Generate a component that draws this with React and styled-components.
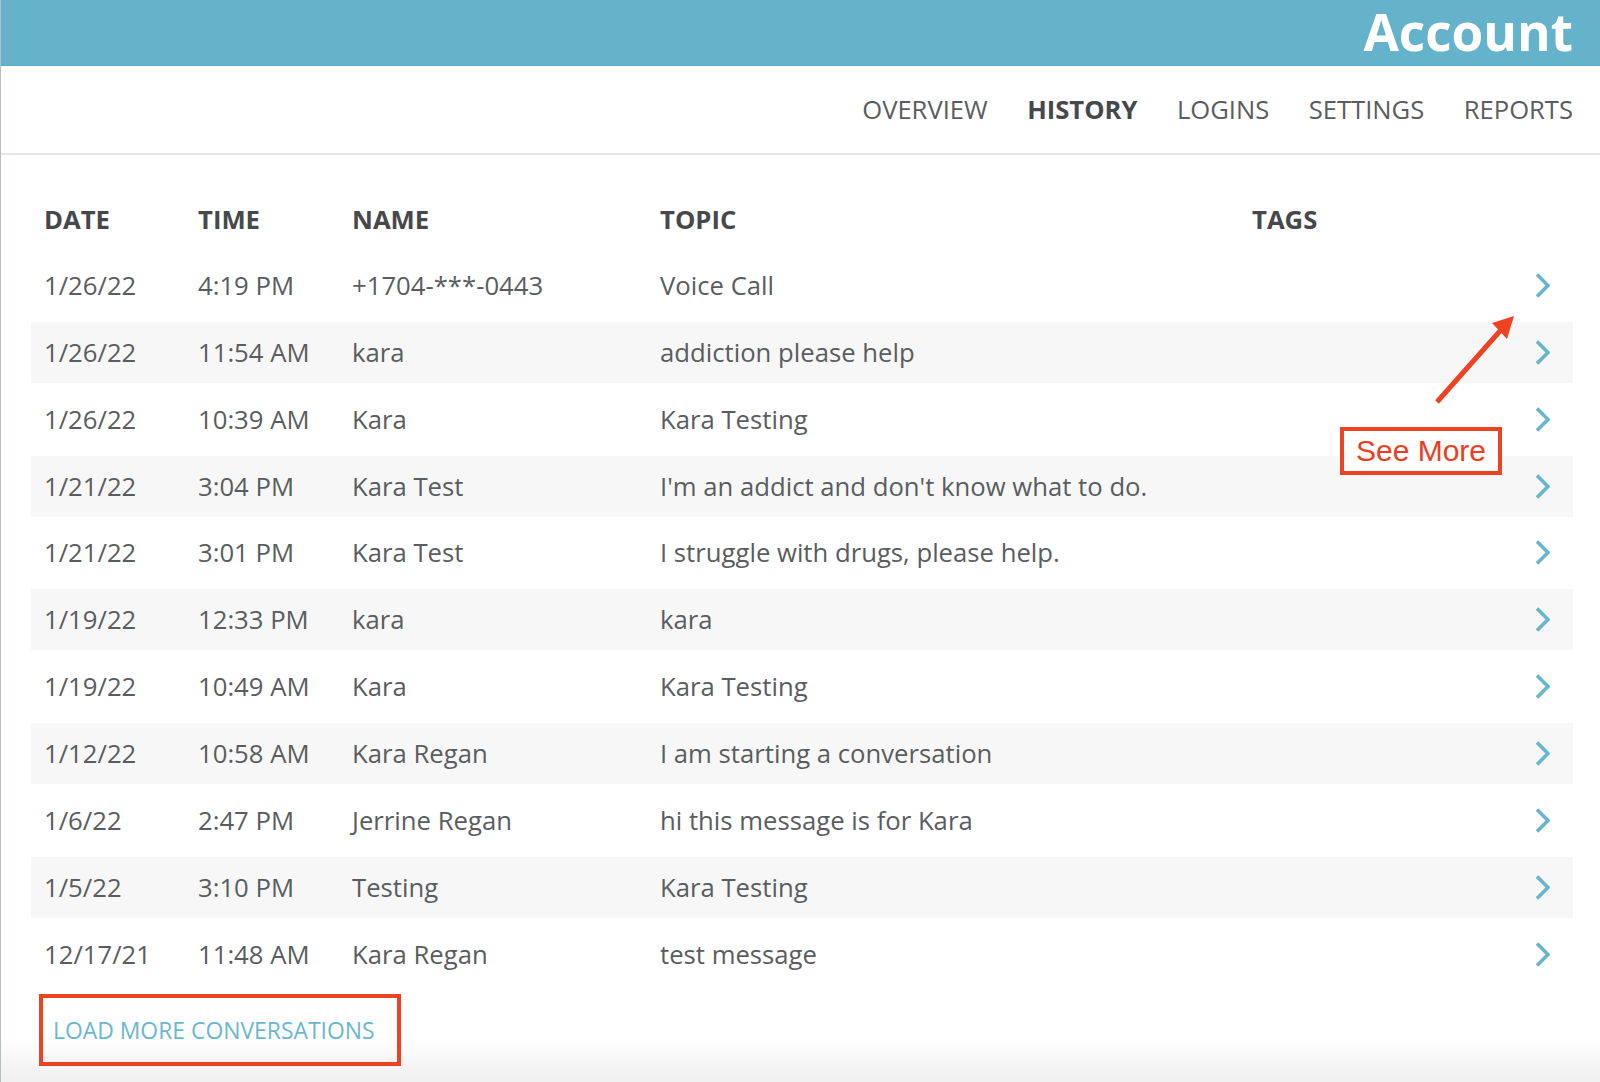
import React from 'react';
import styled, { createGlobalStyle } from 'styled-components';

const GlobalStyle = createGlobalStyle`
    html, body {
        margin: 0;
        padding: 0;
    }

    body {
        font-family: "Open Sans", "Liberation Sans", sans-serif;
        color: #4a4d50;
    }
`;

const Page = styled.div`
    position: relative;
    width: 1600px;
    height: 1082px;
    box-sizing: border-box;
    overflow: hidden;
    border-left: 1px solid #b5bfc4;
    background: linear-gradient(to bottom, #fff 0, #fff 1035px, #f0f0f0 100%);
`;

const TitleBar = styled.header`
    display: flex;
    align-items: flex-start;
    justify-content: flex-end;
    height: 65px;
    padding-right: 27px;
    background: #64b3ca;
    border-bottom: 1px solid #58aec8;
`;

const Title = styled.h1`
    margin: 0;
    color: #fff;
    font-size: 51.3px;
    font-weight: 700;
    line-height: 62px;
`;

const Nav = styled.nav`
    display: flex;
    align-items: center;
    justify-content: flex-end;
    gap: 39.5px;
    box-sizing: border-box;
    height: 89px;
    padding-right: 27px;
    border-bottom: 2px solid #e6e6e6;
`;

const NavItem = styled.a`
    font-size: 25.6px;
    font-weight: ${props => (props.$active ? 700 : 400)};
    color: ${props => (props.$active ? '#46484b' : '#5a5d60')};
    white-space: nowrap;
`;

const Table = styled.div`
    display: flex;
    flex-direction: column;
    gap: 5.9px;
    margin: 33px 27px 0 30px;
`;

const Row = styled.div`
    display: grid;
    grid-template-columns: 154px 154px 308px 592px 1fr 38px;
    align-items: center;
    box-sizing: border-box;
    height: 61px;
    padding: ${props => (props.$head ? '2px' : '0')} 0 0 13px;
    font-size: 25.7px;
    font-weight: ${props => (props.$head ? 700 : 400)};
    color: ${props => (props.$head ? '#46484b' : '#5a5d60')};
    background: ${props => (props.$striped ? '#f7f7f7' : 'transparent')};
    white-space: nowrap;
`;

const Chevron = styled.svg`
    display: block;
    width: 15px;
    height: 25px;
    fill: none;
    stroke: #68b6cc;
    stroke-width: 3.6;
`;

const LoadMore = styled.a`
    display: flex;
    align-items: center;
    box-sizing: border-box;
    width: 362px;
    height: 72px;
    margin: 9px 0 0 38px;
    padding: 2px 0 0 10px;
    border: 4px solid #ee4323;
    font-size: 22.9px;
    color: #6bb8ce;
    white-space: nowrap;
`;

const SeeMore = styled.div`
    position: absolute;
    top: 427px;
    left: 1339px;
    display: flex;
    align-items: center;
    justify-content: center;
    box-sizing: border-box;
    width: 162px;
    height: 48px;
    border: 4px solid #ee4323;
    font-family: "Liberation Sans", Arial, sans-serif;
    font-size: 30px;
    color: #ee3d1e;
    background: #fff;
`;

const Arrow = styled.svg`
    position: absolute;
    top: 310px;
    left: 1425px;
    width: 95px;
    height: 100px;
`;

const conversations = [
    ['1/26/22', '4:19 PM', '+1704-***-0443', 'Voice Call'],
    ['1/26/22', '11:54 AM', 'kara', 'addiction please help'],
    ['1/26/22', '10:39 AM', 'Kara', 'Kara Testing'],
    ['1/21/22', '3:04 PM', 'Kara Test', "I'm an addict and don't know what to do."],
    ['1/21/22', '3:01 PM', 'Kara Test', 'I struggle with drugs, please help.'],
    ['1/19/22', '12:33 PM', 'kara', 'kara'],
    ['1/19/22', '10:49 AM', 'Kara', 'Kara Testing'],
    ['1/12/22', '10:58 AM', 'Kara Regan', 'I am starting a conversation'],
    ['1/6/22', '2:47 PM', 'Jerrine Regan', 'hi this message is for Kara'],
    ['1/5/22', '3:10 PM', 'Testing', 'Kara Testing'],
    ['12/17/21', '11:48 AM', 'Kara Regan', 'test message'],
];

const tabs = ['OVERVIEW', 'HISTORY', 'LOGINS', 'SETTINGS', 'REPORTS'];

const App = () => {
    return (
        <Page>
            <GlobalStyle />
            <TitleBar>
                <Title>Account</Title>
            </TitleBar>
            <Nav>
                {tabs.map(tab => (
                    <NavItem key={tab} $active={tab === 'HISTORY'}>{tab}</NavItem>
                ))}
            </Nav>
            <Table>
                <Row $head>
                    <span>DATE</span>
                    <span>TIME</span>
                    <span>NAME</span>
                    <span>TOPIC</span>
                    <span>TAGS</span>
                    <span />
                </Row>
                {conversations.map(([date, time, name, topic], i) => (
                    <Row key={i} $striped={i % 2 === 1}>
                        <span>{date}</span>
                        <span>{time}</span>
                        <span>{name}</span>
                        <span>{topic}</span>
                        <span />
                        <Chevron viewBox="0 0 15 25">
                            <path d="M2 1.5 L13 12.5 L2 23.5" />
                        </Chevron>
                    </Row>
                ))}
            </Table>
            <LoadMore>LOAD MORE CONVERSATIONS</LoadMore>
            <Arrow viewBox="0 0 95 100">
                <path d="M11 92 L74 21" stroke="#ee4323" strokeWidth="5" fill="none" />
                <path d="M88 6 L66 13 L81 29 Z" fill="#ee4323" />
            </Arrow>
            <SeeMore>See More</SeeMore>
        </Page>
    );
};

export default App;
